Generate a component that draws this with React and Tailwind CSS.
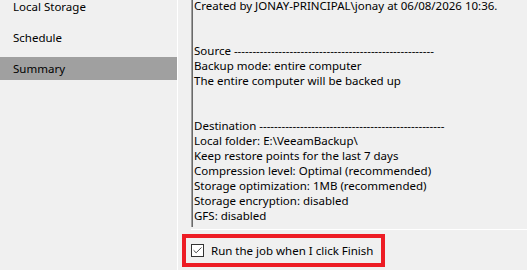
import { Check } from 'lucide-react';

const navItems = ['Local Storage', 'Schedule', 'Summary'];

const summaryLines = [
  'Created by JONAY-PRINCIPAL\\jonay at 06/08/2026 10:36.',
  '',
  '',
  'Source ' + '-'.repeat(54),
  'Backup mode: entire computer',
  'The entire computer will be backed up',
  '',
  '',
  'Destination ' + '-'.repeat(50),
  'Local folder: E:\\VeeamBackup\\',
  'Keep restore points for the last 7 days',
  'Compression level: Optimal (recommended)',
  'Storage optimization: 1MB (recommended)',
  'Storage encryption: disabled',
  'GFS: disabled',
];

export default function App() {
  return (
    <div
      className="flex h-[270px] w-[527px] overflow-hidden bg-[#f0f0f0] text-[11.5px] text-black"
      style={{ fontFamily: '"Segoe UI", "Noto Sans", sans-serif' }}
    >
      {/* Wizard steps */}
      <div className="flex w-[178px] shrink-0 flex-col gap-2 border-r border-white">
        {navItems.map((item, i) => (
          <div
            key={item}
            className={`flex h-[23px] items-center pl-[13px] ${i === 0 ? '-mt-[5px]' : ''} ${
              item === 'Summary' ? 'bg-[#a0a0a0]' : ''
            }`}
          >
            {item}
          </div>
        ))}
      </div>

      {/* Summary panel */}
      <div className="flex flex-1 flex-col">
        <div className="ml-[13px] h-[230px] border-b border-white">
          <div className="h-full border-l border-[#a0a0a0]">
            <div className="h-full border-l border-[#696969] pl-[1px]">
              <div className="-mt-[2px] leading-[15px]">
                {summaryLines.map((line, i) => (
                  <div key={i} className="h-[15px] whitespace-pre">
                    {line}
                  </div>
                ))}
              </div>
            </div>
          </div>
        </div>

        <div className="ml-[4px] mt-[4px] flex h-[33px] w-[203px] items-center border-4 border-[#ed1c24] pl-[5px]">
          <div className="flex h-[13px] w-[13px] items-center justify-center border border-[#333333] bg-white">
            <Check className="h-[11px] w-[11px] text-[#333333]" strokeWidth={2} />
          </div>
          <span className="ml-[7px]">Run the job when I click Finish</span>
        </div>
      </div>
    </div>
  );
}
